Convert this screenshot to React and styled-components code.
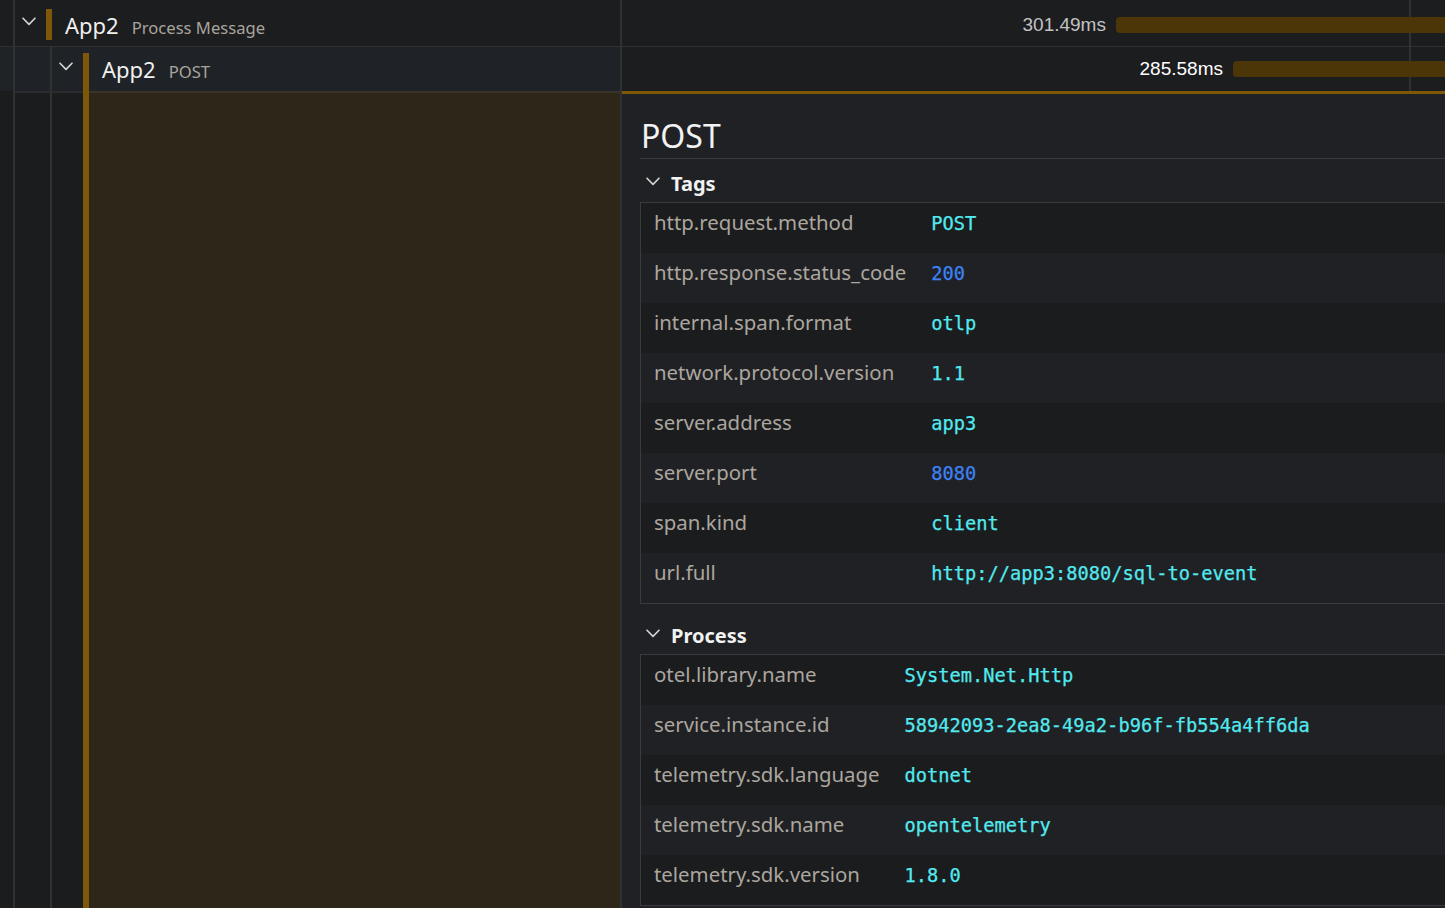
import React from "react";
import styled, { createGlobalStyle } from "styled-components";

const GlobalStyle = createGlobalStyle`
  html, body {
    margin: 0;
    padding: 0;
    background: #1b1c1e;
    overflow: hidden;
  }
  body {
    font-family: "Noto Sans", "Open Sans", sans-serif;
  }
  * {
    box-sizing: border-box;
  }
`;

const Page = styled.div`
  width: 1445px;
  height: 908px;
  overflow: hidden;
  display: flex;
  flex-direction: column;
  background: #1b1c1e;
`;

const SpanRow = styled.div`
  display: grid;
  grid-template-columns: 622px 1fr;
  flex: none;
  height: ${(p) => p.$height}px;
  border-bottom: ${(p) => (p.$divider ? "1px solid #2f3133" : "none")};
`;

const NameCell = styled.div`
  display: flex;
  align-items: stretch;
  padding-left: 13px;
  background: ${(p) => (p.$selected ? "#1f2327" : "#1c1d1f")};
  border-right: 2px solid #2f3133;
  overflow: hidden;
`;

const Guide = styled.div`
  width: ${(p) => p.$width || 37}px;
  flex: none;
  border-left: 2px solid #2f3133;
  border-top: ${(p) => (p.$cap ? "2px solid #2a2c2e" : "none")};
`;

const Toggle = styled.div`
  width: 33px;
  flex: none;
  border-left: 2px solid #2f3133;
  padding: ${(p) => p.$top}px 0 0 7px;
  color: #d6d6d6;

  svg {
    display: block;
  }
`;

const SpanBar = styled.div`
  width: 6px;
  flex: none;
  background: #7f5708;
  margin: ${(p) => (p.$selected ? "6px 0 0" : "9px 0 6px")};
`;

const Label = styled.div`
  display: flex;
  align-items: baseline;
  gap: 13px;
  padding-left: 13px;
  align-self: center;
  margin-top: ${(p) => p.$shift || 0}px;
  white-space: nowrap;
`;

const Service = styled.span`
  font-size: 22px;
  color: #f0f0f0;
`;

const Operation = styled.span`
  font-size: 16.6px;
  color: #a9a49e;
`;

const TimelineCell = styled.div`
  position: relative;
  display: flex;
  align-items: center;
  padding-top: ${(p) => p.$shift || 0}px;
  background: #1c1d1f;
  overflow: hidden;
`;

const Offset = styled.div`
  flex: none;
  display: flex;
  justify-content: flex-end;
  padding-right: 10px;
  white-space: nowrap;
`;

const Duration = styled.span`
  font-family: "Liberation Sans", Arial, sans-serif;
  font-size: 19px;
  color: ${(p) => (p.$selected ? "#ffffff" : "#c2c2c2")};
`;

const DurationBar = styled.div`
  flex: 1;
  height: 16px;
  background: #4c3608;
  border-radius: 4px 0 0 4px;
  position: relative;
  z-index: 1;
`;

const Tick = styled.div`
  position: absolute;
  top: 0;
  bottom: 0;
  left: 787px;
  width: 2px;
  background: #2f3133;
`;

const DetailRow = styled.div`
  flex: 1;
  min-height: 0;
  display: grid;
  grid-template-columns: 622px 1fr;
`;

const Filler = styled.div`
  display: flex;
  padding-left: 13px;
  border-right: 2px solid #2f3133;
`;

const FillerBar = styled.div`
  width: 6px;
  flex: none;
  background: #7f5708;
`;

const Selection = styled.div`
  flex: 1;
  background: #2e2619;
  border-top: 2px solid #3a3426;
`;

const Detail = styled.div`
  border-top: 3px solid #7f5708;
  background: #202124;
  padding: 22px 0 0 18px;
  overflow: hidden;
`;

const Title = styled.h2`
  margin: 0;
  padding: 0 0 2px 1px;
  font-size: 32px;
  font-weight: 400;
  line-height: 40px;
  color: #f2f2f2;
  border-bottom: 1px solid #3a3b3d;
`;

const Section = styled.section`
  margin-top: ${(p) => (p.$first ? 0 : 7)}px;
`;

const SectionHeader = styled.div`
  display: flex;
  align-items: center;
  gap: 10px;
  padding: 11px 0 4px 5px;
  font-size: 20px;
  font-weight: 700;
  line-height: 28px;
  color: #f2f2f2;

  svg {
    display: block;
    margin-top: -5px;
    color: #d6d6d6;
  }
`;

const Table = styled.table`
  width: 100%;
  border-collapse: separate;
  border-spacing: 0;
  border: 1px solid #3a3b3d;
  border-right: none;
`;

const Row = styled.tr`
  &:nth-child(odd) {
    background: #1b1c1e;
  }
`;

const Key = styled.td`
  width: 1px;
  height: 50px;
  padding: 5px 13px 0;
  vertical-align: baseline;
  white-space: nowrap;
  font-size: 20.4px;
  line-height: 28px;
  color: #aba69f;
`;

const Value = styled.td`
  padding: 5px 13px 0 12px;
  vertical-align: baseline;
  white-space: nowrap;
  font-family: "DejaVu Sans Mono", "Liberation Mono", monospace;
  font-size: 18.7px;
  line-height: 28px;
  color: ${(p) => (p.$number ? "#3d82f5" : "#52eaf0")};
  -webkit-text-stroke: 0.25px currentColor;
`;

function Chevron({ size = 14 }) {
  return (
    <svg width={size} height={9} viewBox="0 0 14 9" fill="none">
      <polyline
        points="1,1.2 7,7.4 13,1.2"
        stroke="currentColor"
        strokeWidth="1.6"
        strokeLinecap="round"
        strokeLinejoin="round"
      />
    </svg>
  );
}

const spans = [
  { service: "App2", operation: "Process Message", duration: "301.49ms", start: 60.02 },
  { service: "App2", operation: "POST", duration: "285.58ms", start: 74.24, selected: true },
];

const tags = [
  ["http.request.method", "POST"],
  ["http.response.status_code", 200],
  ["internal.span.format", "otlp"],
  ["network.protocol.version", "1.1"],
  ["server.address", "app3"],
  ["server.port", 8080],
  ["span.kind", "client"],
  ["url.full", "http://app3:8080/sql-to-event"],
];

const processTags = [
  ["otel.library.name", "System.Net.Http"],
  ["service.instance.id", "58942093-2ea8-49a2-b96f-fb554a4ff6da"],
  ["telemetry.sdk.language", "dotnet"],
  ["telemetry.sdk.name", "opentelemetry"],
  ["telemetry.sdk.version", "1.8.0"],
];

function KeyValues({ title, items, first }) {
  return (
    <Section $first={first}>
      <SectionHeader>
        <Chevron size={16} />
        {title}
      </SectionHeader>
      <Table>
        <tbody>
          {items.map(([k, v]) => (
            <Row key={k}>
              <Key>{k}</Key>
              <Value $number={typeof v === "number"}>{String(v)}</Value>
            </Row>
          ))}
        </tbody>
      </Table>
    </Section>
  );
}

export default function App() {
  return (
    <Page>
      <GlobalStyle />
      {spans.map((span, depth) => (
        <SpanRow
          key={depth}
          $height={depth === 0 ? 47 : 44}
          $divider={depth === 0}
        >
          <NameCell $selected={span.selected}>
            {Array.from({ length: depth }).map((_, i) => (
              <Guide key={i} />
            ))}
            <Toggle $top={depth === 0 ? 17 : 15}>
              <Chevron />
            </Toggle>
            <SpanBar $selected={span.selected} />
            <Label $shift={depth === 0 ? 4 : 0}>
              <Service>{span.service}</Service>
              <Operation>{span.operation}</Operation>
            </Label>
          </NameCell>
          <TimelineCell $shift={depth === 0 ? 4 : 0}>
            <Tick />
            <Offset style={{ width: `${span.start}%` }}>
              <Duration $selected={span.selected}>{span.duration}</Duration>
            </Offset>
            <DurationBar />
          </TimelineCell>
        </SpanRow>
      ))}
      <DetailRow>
        <Filler>
          <Guide $cap />
          <Guide $cap $width={33} />
          <FillerBar />
          <Selection />
        </Filler>
        <Detail>
          <Title>POST</Title>
          <KeyValues title="Tags" items={tags} first />
          <KeyValues title="Process" items={processTags} />
        </Detail>
      </DetailRow>
    </Page>
  );
}
